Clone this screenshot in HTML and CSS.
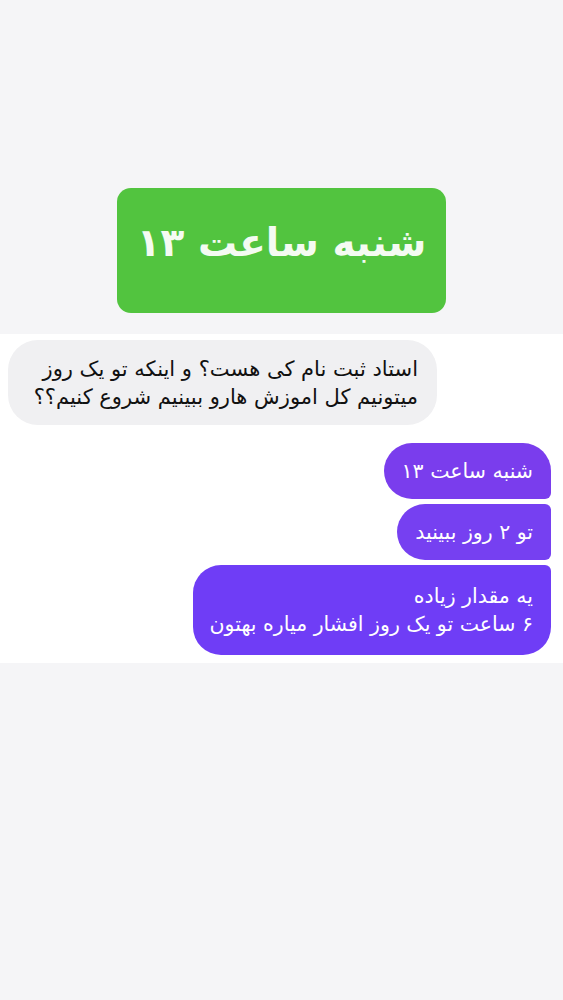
FILE: index.html
```html
<!DOCTYPE html>
<html lang="fa" dir="rtl">
<head>
  <meta charset="UTF-8">
  <meta name="viewport" content="width=device-width, initial-scale=1.0">
  <title>Chat</title>
  <link rel="stylesheet" href="styles.css">
</head>
<body>
  <header class="top">
    <div class="title-card">شنبه ساعت ۱۳</div>
  </header>
  <main class="chat">
    <div class="msg in">استاد ثبت نام کی هست؟ و اینکه تو یک روز<br>میتونیم کل اموزش هارو ببینیم شروع کنیم؟؟</div>
    <div class="outgoing">
      <div class="msg out first">شنبه ساعت ۱۳</div>
      <div class="msg out mid">تو ۲ روز ببینید</div>
      <div class="msg out last">یه مقدار زیاده<br>۶ ساعت تو یک روز افشار میاره بهتون</div>
    </div>
  </main>
  <footer class="bottom"></footer>
</body>
</html>
```

FILE: styles.css
```css
body{
  margin: 0;
  background: #f5f5f7;
  font-family: "DejaVu Sans", sans-serif;
}
.top{
  height: 334px;
  display: flex;
  justify-content: center;
  align-items: flex-start;
}
.title-card{
  margin-top: 188px;
  width: 329px;
  height: 125px;
  box-sizing: border-box;
  background: #52c43f;
  border-radius: 14px;
  color: #f4fbf2;
  font-size: 39px;
  font-weight: bold;
  display: flex;
  align-items: center;
  justify-content: center;
  padding-bottom: 16px;
}
.chat{
  background: #fff;
  padding: 6px 12px 8px 8px;
  display: flex;
  flex-direction: column;
  height: 315px;
}
.msg{
  font-size: 20.5px;
  line-height: 28px;
}
.in{
  align-self: flex-end;
  width: 429px;
  box-sizing: border-box;
  background: #f0f0f2;
  color: #111;
  font-size: 21px;
  border-radius: 30px;
  padding: 15px 19px 14px 6px;
}
.outgoing{
  display: flex;
  flex-direction: column;
  align-items: flex-start;
  gap: 5px;
  margin-top: 18px;
}
.out{
  background: #7640f1;
  color: #fff;
  padding: 14px 18px 14px 18px;
  border-radius: 28px 6px 6px 28px;
}
.first{
  background: #7a3ded;
  border-top-right-radius: 28px;
}
.last{
  background: #6f3df6;
  border-bottom-right-radius: 28px;
  padding: 17px 18px 17px 17px;
}
.bottom{
  height: 337px;
}
```
